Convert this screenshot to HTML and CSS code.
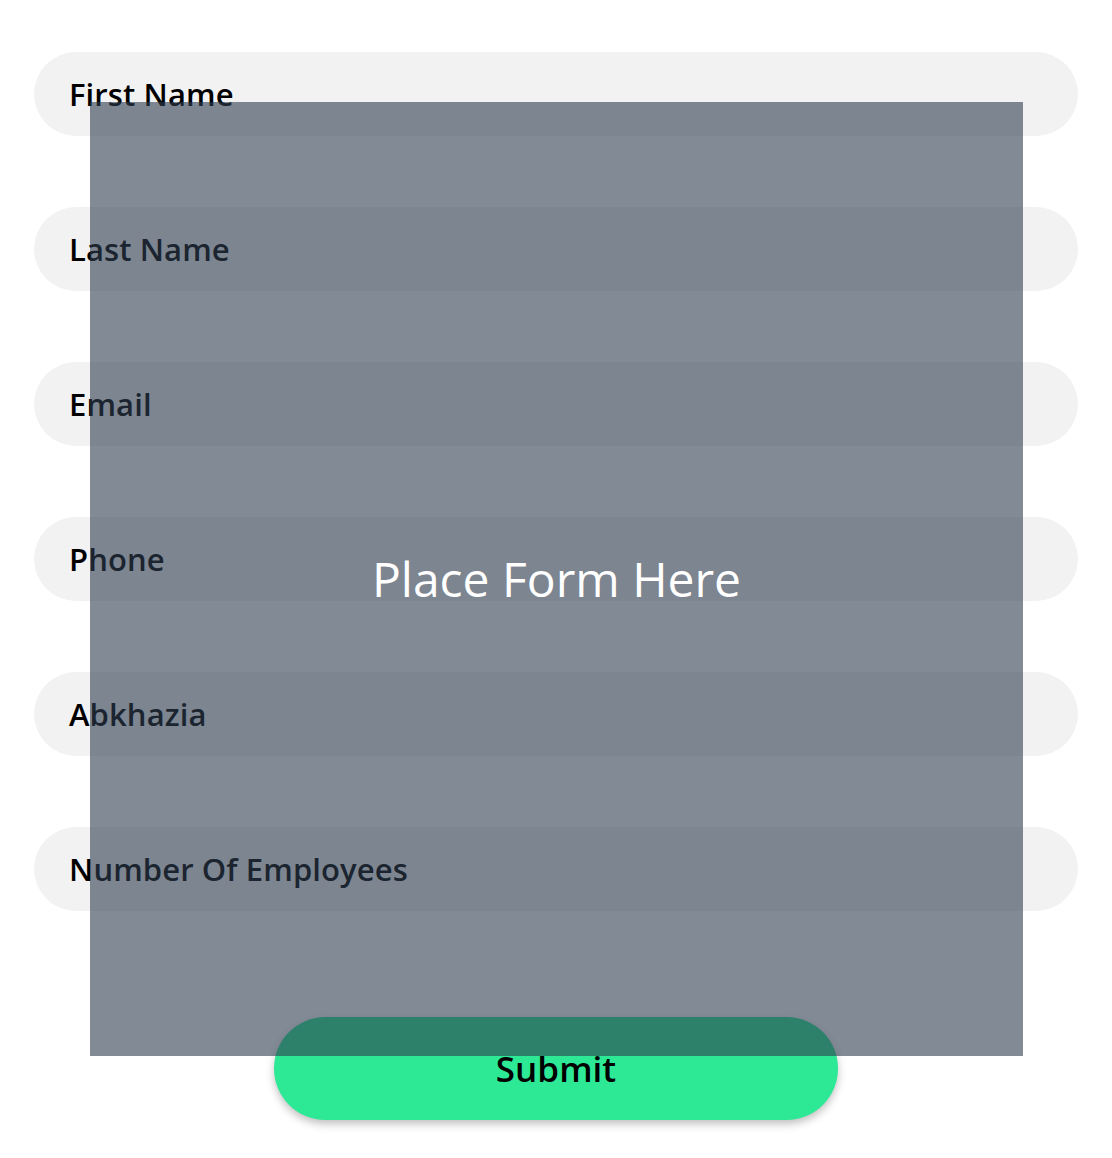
FILE: index.html
```html
<!DOCTYPE html>
<html>
<head>
<meta charset="utf-8">
<link rel="stylesheet" href="styles.css">
</head>
<body>
<div class="page">
  <form class="form">
    <div class="field">First Name</div>
    <div class="field">Last Name</div>
    <div class="field">Email</div>
    <div class="field">Phone</div>
    <div class="field">Abkhazia</div>
    <div class="field">Number Of Employees</div>
    <div class="actions"><button type="button" class="submit">Submit</button></div>
  </form>
  <div class="overlay"><span>Place Form Here</span></div>
</div>
</body>
</html>
```
FILE: styles.css
```css
html, body {
  margin: 0;
  padding: 0;
  background: #ffffff;
}
body {
  font-family: "Open Sans", "Noto Sans", sans-serif;
}
.page {
  position: relative;
  width: 1112px;
  height: 1158px;
}
.form {
  display: flex;
  flex-direction: column;
  gap: 71px;
  padding: 52px 34px 0 34px;
}
.field {
  height: 84px;
  border-radius: 42px;
  background: #f3f2f3;
  display: flex;
  align-items: center;
  padding-left: 35px;
  font-size: 31px;
  font-weight: 600;
  color: #000;
  letter-spacing: 0.1px;
}
.actions {
  display: flex;
  justify-content: center;
  margin-top: 35px;
}
.submit {
  width: 564px;
  height: 103px;
  border: none;
  border-radius: 52px;
  background: #2de996;
  color: #000;
  font-family: "Open Sans", "Noto Sans", sans-serif;
  font-size: 35px;
  font-weight: 600;
  box-shadow: 0 4px 8px rgba(0,0,0,0.25);
  padding: 0;
}
.overlay {
  position: absolute;
  left: 90px;
  top: 102px;
  width: 933px;
  height: 954px;
  background: rgba(45, 60, 78, 0.6);
  display: flex;
  align-items: center;
  justify-content: center;
}
.overlay span {
  color: #fff;
  font-size: 48px;
  font-weight: 400;
  margin-top: -2px;
}
```
